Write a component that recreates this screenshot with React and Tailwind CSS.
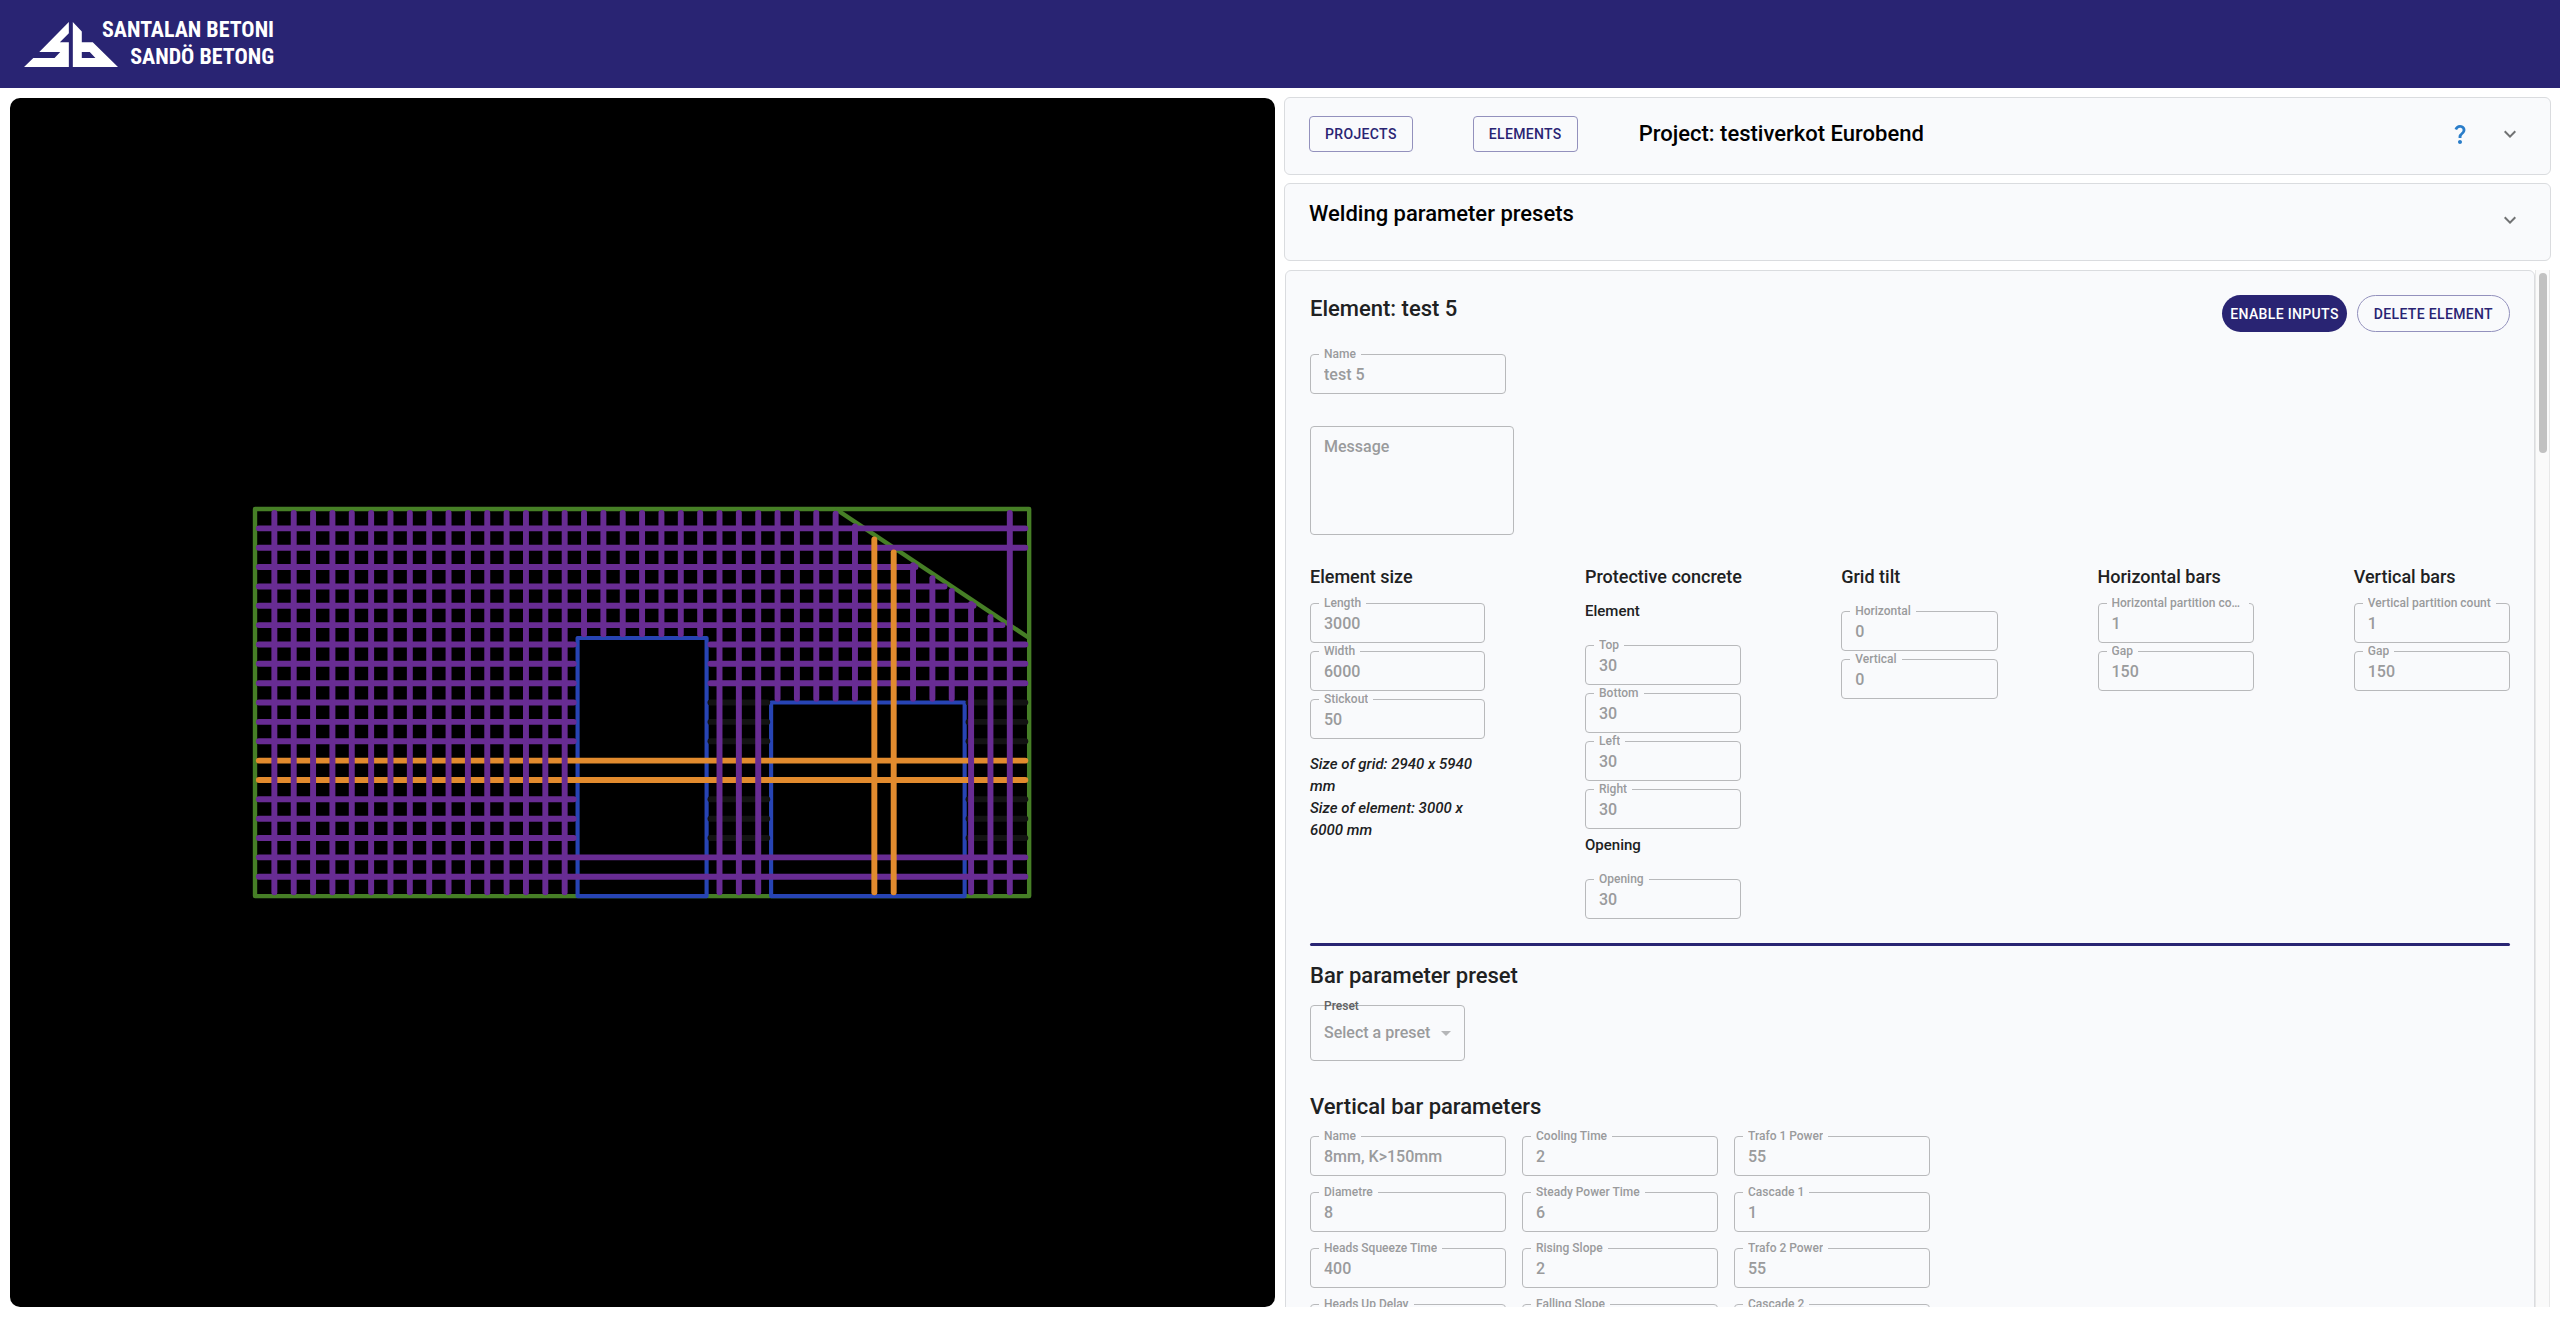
import { useId } from "react";
import { MdArrowDropDown, MdExpandMore, MdQuestionMark } from "react-icons/md";

const PURPLE = "#682c93";
const ORANGE = "#e28b2e";
const GREY = "#131313";

const range = (from, to, step = 150) => {
  const out = [];
  for (let v = from; v <= to; v += step) out.push(v);
  return out;
};

// The sloped edge runs from (4500, 0) to (6000, 1000), in millimetres.
const slopeY = (x) => ((x - 4500) * 2) / 3 + 36;
const slopeX = (y) => 4500 + y * 1.5 - 56;

const horizontalBars = [
  ...[150, 300, 2700, 2850].map((y) => [30, 5970, y, PURPLE]),
  ...range(450, 900).map((y) => [30, slopeX(y), y, PURPLE]),
  ...range(1050, 2550)
    .filter((y) => y !== 1950 && y !== 2100)
    .map((y) => [30, 2470, y, PURPLE]),
  ...range(1050, 1350).map((y) => [3530, 5970, y, PURPLE]),
  ...[1500, 1650, 1800, 2250, 2400, 2550].flatMap((y) => [
    [3530, 3970, y, GREY],
    [5530, 5970, y, GREY],
  ]),
  ...[1950, 2100].map((y) => [30, 5970, y, ORANGE]),
];

const verticalBars = [
  ...range(150, 2400).map((x) => [30, 2970, x, PURPLE]),
  ...range(2550, 3450).map((x) => [30, 970, x, PURPLE]),
  ...range(3600, 3900).map((x) => [30, 2970, x, PURPLE]),
  ...range(4050, 4350).map((x) => [30, 1470, x, PURPLE]),
  ...[4500, 4650, 5100, 5250, 5400].map((x) => [slopeY(x), 1470, x, PURPLE]),
  ...[5550, 5700].map((x) => [slopeY(x), 2970, x, PURPLE]),
  [30, 2970, 5850, PURPLE],
  ...[4800, 4950].map((x) => [slopeY(x), 2970, x, ORANGE]),
];

function ElementDrawing() {
  return (
    <svg
      viewBox="0 0 6000 3000"
      className="w-[61.2%] overflow-visible"
      fill="none"
      role="img"
      aria-label="Reinforcement grid"
    >
      <g stroke="#467f26" strokeWidth="34" strokeLinejoin="round">
        <rect width="6000" height="3000" />
        <path d="M4500 0 6000 1000" />
      </g>
      <g stroke="#2744b4" strokeWidth="32" strokeLinejoin="round">
        <rect x="2500" y="1000" width="1000" height="2000" />
        <rect x="4000" y="1500" width="1500" height="1500" />
      </g>
      <g strokeWidth="46" strokeLinecap="round">
        {horizontalBars.map(([x1, x2, y, color]) => (
          <path key={`h${x1}-${y}`} stroke={color} d={`M${x1} ${y}H${x2}`} />
        ))}
        {verticalBars.map(([y1, y2, x, color]) => (
          <path key={`v${x}`} stroke={color} d={`M${x} ${y1}V${y2}`} />
        ))}
      </g>
    </svg>
  );
}

function Logo() {
  return (
    <a href="#home" className="flex items-start text-white">
      <svg viewBox="72 66 283 135" className="mt-[22px] h-[45px] w-[94px]" fill="currentColor" aria-hidden="true">
        <path d="M207 66 118 156H181L164 174H100L72 201H207V127H180L207 100Z" />
        <path
          fillRule="evenodd"
          d="M219 66 246 94V127H279L355 201H219ZM246 156V174H287L270 156Z"
        />
      </svg>
      <span className="-ml-4 mt-4 text-right font-['Roboto_Condensed','Liberation_Sans_Narrow','Open_Sans_Condensed',sans-serif] text-[22px] leading-[27px] font-bold">
        SANTALAN BETONI
        <br />
        SANDÖ BETONG
      </span>
    </a>
  );
}

function Field({ label, value }) {
  const id = useId();
  return (
    <fieldset className="h-12 min-w-0 rounded border border-[#b8b9bb] text-[#9a9b9c]">
      <legend className="ml-2 flex h-4 max-w-[calc(100%-12px)] px-[5px] text-xs leading-4">
        <label htmlFor={id} className="truncate">
          {label}
        </label>
      </legend>
      <input
        id={id}
        disabled
        defaultValue={value}
        className="block h-[25px] w-full bg-transparent px-[13px] text-base leading-6"
      />
    </fieldset>
  );
}

function Card({ className, children }) {
  return (
    <section className={`rounded-md border border-[#dadcdf] bg-[#f9fafc] ${className}`}>{children}</section>
  );
}

function ColumnTitle({ children }) {
  return <h3 className="text-lg leading-6 whitespace-nowrap">{children}</h3>;
}

function ExpandButton({ label }) {
  return (
    <button aria-label={label} className="text-[#717273]">
      <MdExpandMore className="size-6" />
    </button>
  );
}

const verticalParameters = [
  ["Name", "8mm, K>150mm"],
  ["Cooling Time", "2"],
  ["Trafo 1 Power", "55"],
  ["Diametre", "8"],
  ["Steady Power Time", "6"],
  ["Cascade 1", "1"],
  ["Heads Squeeze Time", "400"],
  ["Rising Slope", "2"],
  ["Trafo 2 Power", "55"],
  ["Heads Up Delay", ""],
  ["Falling Slope", ""],
  ["Cascade 2", ""],
];

const outlinedButton =
  "border border-[#9391bd] text-sm font-medium tracking-wide text-[#292473]";

function ElementForm() {
  return (
    <Card className="min-w-0 flex-1 self-start p-6 text-[#202122]">
      <div className="flex items-start gap-2.5">
        <h2 className="flex-1 text-[22px] leading-7">Element: test 5</h2>
        <button className="h-[37px] rounded-full bg-[#292473] px-2 text-sm font-medium tracking-wide text-white">
          ENABLE INPUTS
        </button>
        <button className={`h-[37px] rounded-full px-4 ${outlinedButton}`}>DELETE ELEMENT</button>
      </div>

      <div className="mt-3.5 w-[196px]">
        <Field label="Name" value="test 5" />
      </div>
      <textarea
        disabled
        aria-label="Message"
        placeholder="Message"
        className="mt-8 block h-[109px] w-[204px] resize-none rounded border border-[#b8b9bb] px-[13px] py-2 text-base leading-6 placeholder:text-[#9a9b9c]"
      />

      <div className="mt-[30px] flex gap-[100px]">
        <div className="w-[175px]">
          <ColumnTitle>Element size</ColumnTitle>
          <div className="mt-1.5">
            <Field label="Length" value="3000" />
            <Field label="Width" value="6000" />
            <Field label="Stickout" value="50" />
          </div>
          <p className="mt-3.5 text-[15px] leading-[22px] italic">
            Size of grid: 2940 x 5940 mm
            <br />
            Size of element: 3000 x 6000 mm
          </p>
        </div>
        <div className="min-w-0 flex-1">
          <ColumnTitle>Protective concrete</ColumnTitle>
          <h4 className="mt-2.5 text-[15px] leading-6">Element</h4>
          <div className="mt-3.5">
            <Field label="Top" value="30" />
            <Field label="Bottom" value="30" />
            <Field label="Left" value="30" />
            <Field label="Right" value="30" />
          </div>
          <h4 className="mt-1 text-[15px] leading-6">Opening</h4>
          <div className="mt-3.5">
            <Field label="Opening" value="30" />
          </div>
        </div>
        <div className="min-w-0 flex-1">
          <ColumnTitle>Grid tilt</ColumnTitle>
          <div className="mt-3.5">
            <Field label="Horizontal" value="0" />
            <Field label="Vertical" value="0" />
          </div>
        </div>
        <div className="min-w-0 flex-1">
          <ColumnTitle>Horizontal bars</ColumnTitle>
          <div className="mt-1.5">
            <Field label="Horizontal partition count" value="1" />
            <Field label="Gap" value="150" />
          </div>
        </div>
        <div className="min-w-0 flex-1">
          <ColumnTitle>Vertical bars</ColumnTitle>
          <div className="mt-1.5">
            <Field label="Vertical partition count" value="1" />
            <Field label="Gap" value="150" />
          </div>
        </div>
      </div>

      <hr className="mt-6 h-[3px] rounded-full border-0 bg-[#292473]" />

      <h2 className="mt-4 text-[22px] leading-7">Bar parameter preset</h2>
      <div className="relative mt-[15px] flex h-14 w-[155px] items-center rounded border border-[#b8b9bb] text-[#9a9b9c]">
        <label htmlFor="preset" className="absolute -top-2 left-[13px] text-xs leading-4 text-[#606163]">
          Preset
        </label>
        <select
          id="preset"
          disabled
          className="h-full w-full appearance-none bg-transparent pl-[13px] text-base opacity-100"
        >
          <option>Select a preset</option>
        </select>
        <MdArrowDropDown className="pointer-events-none absolute right-1.5 size-6 text-[#b5b6b8]" />
      </div>

      <h2 className="mt-8 text-[22px] leading-7">Vertical bar parameters</h2>
      <div className="mt-[7px] grid grid-cols-[repeat(3,196px)] gap-x-4 gap-y-2">
        {verticalParameters.map(([label, value]) => (
          <Field key={label} label={label} value={value} />
        ))}
      </div>
    </Card>
  );
}

export default function App() {
  return (
    <div className="flex h-screen flex-col overflow-hidden bg-white font-['Roboto',sans-serif] font-medium">
      <header className="h-[88px] shrink-0 bg-[#292473] pl-6">
        <Logo />
      </header>

      <main className="grid min-h-0 flex-1 grid-cols-2 gap-[9px] pt-[9px] pr-[9px] pb-2.5 pl-2.5">
        <div className="mt-px mr-px flex items-center justify-center rounded-[10px] bg-black">
          <ElementDrawing />
        </div>

        <div className="flex min-h-0 min-w-0 flex-col">
          <Card className="-ml-px flex h-[78px] shrink-0 items-start pt-[18px] pr-7 pl-6">
            <div className="flex h-9 flex-1 items-center">
              <button className={`h-9 rounded px-[15px] ${outlinedButton}`}>PROJECTS</button>
              <button className={`ml-[60px] h-9 rounded px-[15px] ${outlinedButton}`}>ELEMENTS</button>
              <h1 className="ml-[61px] flex-1 text-[22px] leading-7 text-black">Project: testiverkot Eurobend</h1>
              <button aria-label="Help" className="mr-[26px] text-[#2a7dc9]">
                <MdQuestionMark className="size-6" />
              </button>
              <ExpandButton label="Expand project" />
            </div>
          </Card>

          <Card className="mt-2 -ml-px flex h-[78px] shrink-0 items-start pt-[18px] pr-7 pl-6">
            <h2 className="flex-1 text-[22px] leading-6 text-black">Welding parameter presets</h2>
            <div className="mt-1.5">
              <ExpandButton label="Expand presets" />
            </div>
          </Card>

          <div className="mt-[9px] flex min-h-0 flex-1">
            <div className="flex min-w-0 flex-1 overflow-y-auto [scrollbar-width:none]">
              <ElementForm />
            </div>
            <div className="mr-px flex w-[15px] justify-center border-x border-[#e8e8e8] bg-[#fafafa] pt-[3px]" aria-hidden="true">
              <div className="h-[180px] w-2 rounded-full bg-[#c1c1c1]" />
            </div>
          </div>
        </div>
      </main>
    </div>
  );
}
